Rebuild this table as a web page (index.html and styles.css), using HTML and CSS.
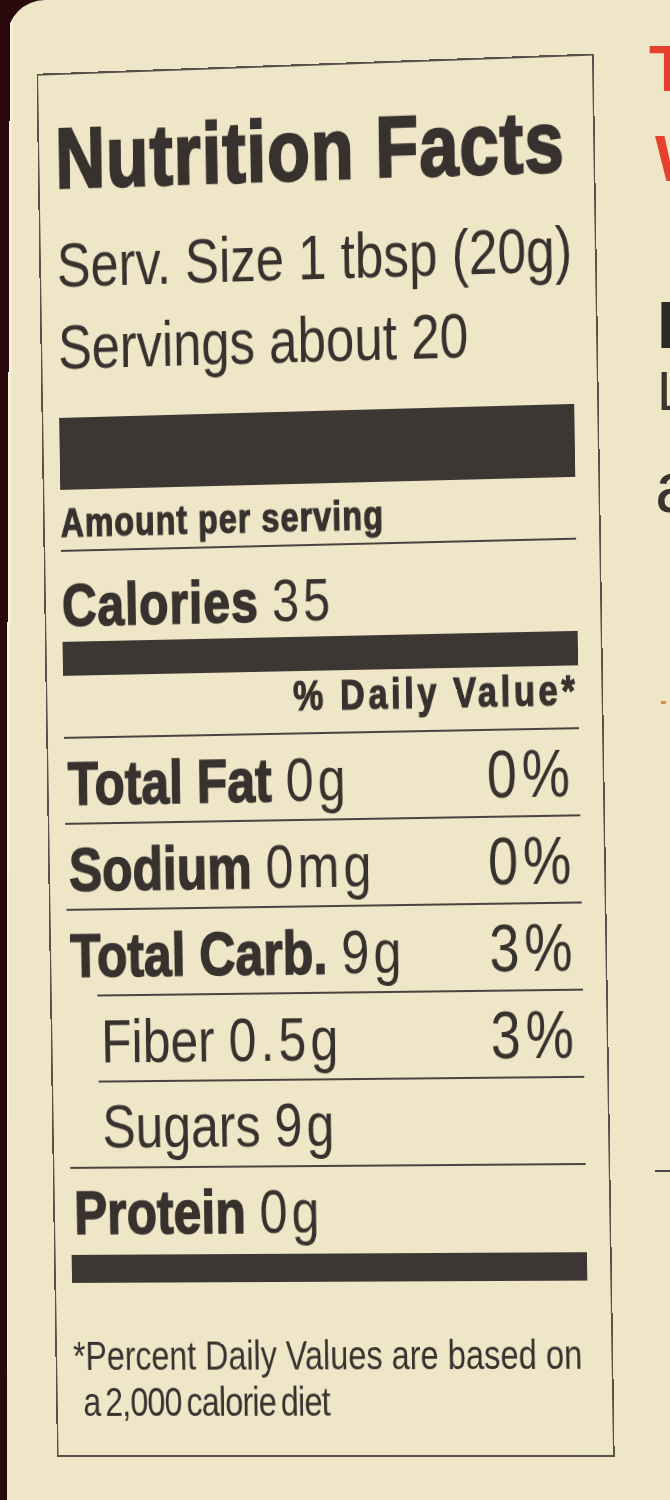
FILE: index.html
```html
<!DOCTYPE html>
<html lang="en">
<head>
<meta charset="utf-8">
<title>Nutrition Facts</title>
<link rel="stylesheet" href="styles.css">
</head>
<body>
<div class="paper">
  <div class="sheet">
    <section class="label">
      <h1 class="title">Nutrition Facts</h1>
      <p class="serv serv-first">Serv. Size 1 tbsp (20g)</p>
      <p class="serv">Servings about 20</p>
      <div class="bar bar-thick"></div>
      <p class="amount">Amount per serving</p>
      <div class="rule"></div>
      <p class="calories"><b>Calories</b> <span class="val">35</span></p>
      <div class="bar bar-mid"></div>
      <p class="dv">% Daily Value*</p>
      <div class="rule"></div>
      <div class="row"><span class="name"><b>Total Fat</b> <span class="val">0g</span></span><span class="pct">0%</span></div>
      <div class="rule"></div>
      <div class="row"><span class="name"><b>Sodium</b> <span class="val">0mg</span></span><span class="pct">0%</span></div>
      <div class="rule"></div>
      <div class="row"><span class="name"><b>Total Carb.</b> <span class="val">9g</span></span><span class="pct">3%</span></div>
      <div class="rule rule-indent"></div>
      <div class="row row-indent"><span class="name">Fiber <span class="val">0.5g</span></span><span class="pct">3%</span></div>
      <div class="rule rule-indent"></div>
      <div class="row row-indent"><span class="name">Sugars <span class="val">9g</span></span></div>
      <div class="rule"></div>
      <div class="row"><span class="name"><b>Protein</b> <span class="val">0g</span></span></div>
      <div class="bar bar-thin"></div>
      <p class="foot foot-first">*Percent Daily Values are based on</p>
      <p class="foot foot-indent">a 2,000 calorie diet</p>
    </section>
    <aside class="side">
      <p class="side-red side-t">The</p>
      <p class="side-red side-w">Way</p>
      <p class="side-head">IN</p>
      <p class="side-text side-l">Lorem</p>
      <p class="side-text side-a">and</p>
      <span class="side-mark"></span>
      <span class="side-dash"></span>
    </aside>
  </div>
</div>
</body>
</html>
```

FILE: styles.css
```css
html, body {
  margin: 0;
  padding: 0;
  overflow: hidden;
}

p, h1 {
  margin: 0;
}

body {
  width: 670px;
  height: 1500px;
  background: #2a0a0d;
  font-family: "Liberation Sans", Arial, sans-serif;
  color: #38322f;
}

/* cream card; its left edge leans slightly, like the photographed box */
.paper {
  margin-left: 7px;
  height: 1500px;
  background: linear-gradient(90.23deg, #2a0a0d 0, #2a0a0d 3px, #f7f0da 3px, #f7f0da 6px, #efe6c8 6px);
  border-top-left-radius: 38px;
  overflow: hidden;
}

.sheet {
  display: flex;
  align-items: flex-start;
  padding-left: 50px;
}

/* The label is laid out wide and then squeezed / tilted like the photo */
.label {
  flex: none;
  box-sizing: border-box;
  width: 688px;
  margin-top: 73px;
  margin-right: -138px;
  border: 2px solid #57514a;
  padding: 41px 28px 30px 20px;
  transform-origin: 0 100%;
  transform: perspective(2000px) rotateY(-3deg) skewX(0.85deg) scaleX(0.8);
}

.label b {
  -webkit-text-stroke: 1.5px #38322f;
}

.title {
  font-size: 86px;
  line-height: 85px;
  font-weight: 700;
  letter-spacing: 1.5px;
  white-space: nowrap;
  -webkit-text-stroke: 2.5px #38322f;
}

.serv {
  font-size: 63px;
  line-height: 82px;
  font-weight: 400;
  white-space: nowrap;
}

.serv-first {
  margin-top: 23px;
}

.bar {
  background: #3d3734;
}

.bar-thick {
  height: 72px;
  margin-top: 30px;
}

.bar-mid {
  height: 34px;
}

.bar-thin {
  height: 28px;
  margin-top: 2px;
}

.rule {
  height: 2px;
  background: #4a4440;
}

.rule-indent {
  margin-left: 37px;
}

.amount {
  font-size: 40px;
  line-height: 48px;
  font-weight: 700;
  letter-spacing: 1.3px;
  margin-top: 9px;
  margin-bottom: 3px;
  -webkit-text-stroke: 1.2px #38322f;
}

.calories {
  font-size: 60px;
  line-height: 72px;
  margin-top: 18px;
  white-space: nowrap;
}

.calories b {
  letter-spacing: 1px;
}

.val {
  font-weight: 400;
  letter-spacing: 5px;
}

.dv {
  font-size: 42px;
  line-height: 48px;
  font-weight: 700;
  letter-spacing: 4.5px;
  text-align: right;
  margin-top: 1px;
  margin-bottom: 12px;
  -webkit-text-stroke: 1.2px #38322f;
}

.row {
  display: flex;
  justify-content: space-between;
  align-items: baseline;
  height: 84px;
  box-sizing: border-box;
  padding: 3px 6px 0 4px;
  font-size: 62px;
  line-height: 81px;
  white-space: nowrap;
}

.row-indent {
  padding-left: 41px;
}

.pct {
  font-size: 66px;
  letter-spacing: 6px;
}

.foot {
  font-size: 40px;
  line-height: 46px;
  white-space: nowrap;
}

.foot-first {
  margin-top: 50px;
}

.foot-indent {
  padding-left: 12px;
  letter-spacing: -1px;
  word-spacing: -4px;
}

/* partial column of the neighbouring panel, cut off by the frame */
.side {
  flex: none;
  margin-left: 42px;
  display: flex;
  flex-direction: column;
  align-items: flex-start;
  white-space: nowrap;
}

.side-red {
  color: #e5412d;
  font-weight: 700;
  font-size: 64px;
  line-height: 64px;
}

.side-t {
  margin-top: 37px;
}

.side-w {
  margin-top: 26px;
  margin-left: 6px;
}

.side-head {
  font-size: 66px;
  line-height: 66px;
  font-weight: 700;
  color: #2e2a28;
  margin-top: 101px;
  margin-left: 8px;
}

.side-text {
  color: #3a3431;
}

.side-l {
  font-size: 56px;
  line-height: 56px;
  margin-top: 5px;
  margin-left: 8px;
}

.side-a {
  font-size: 72px;
  line-height: 72px;
  margin-top: 32px;
  margin-left: 6px;
}

.side-mark {
  display: block;
  width: 5px;
  height: 3px;
  margin-top: 178px;
  margin-left: 12px;
  background: #e08a3c;
}

.side-dash {
  display: block;
  width: 24px;
  height: 2px;
  margin-top: 466px;
  margin-left: 6px;
  background: #4a4440;
}
```
